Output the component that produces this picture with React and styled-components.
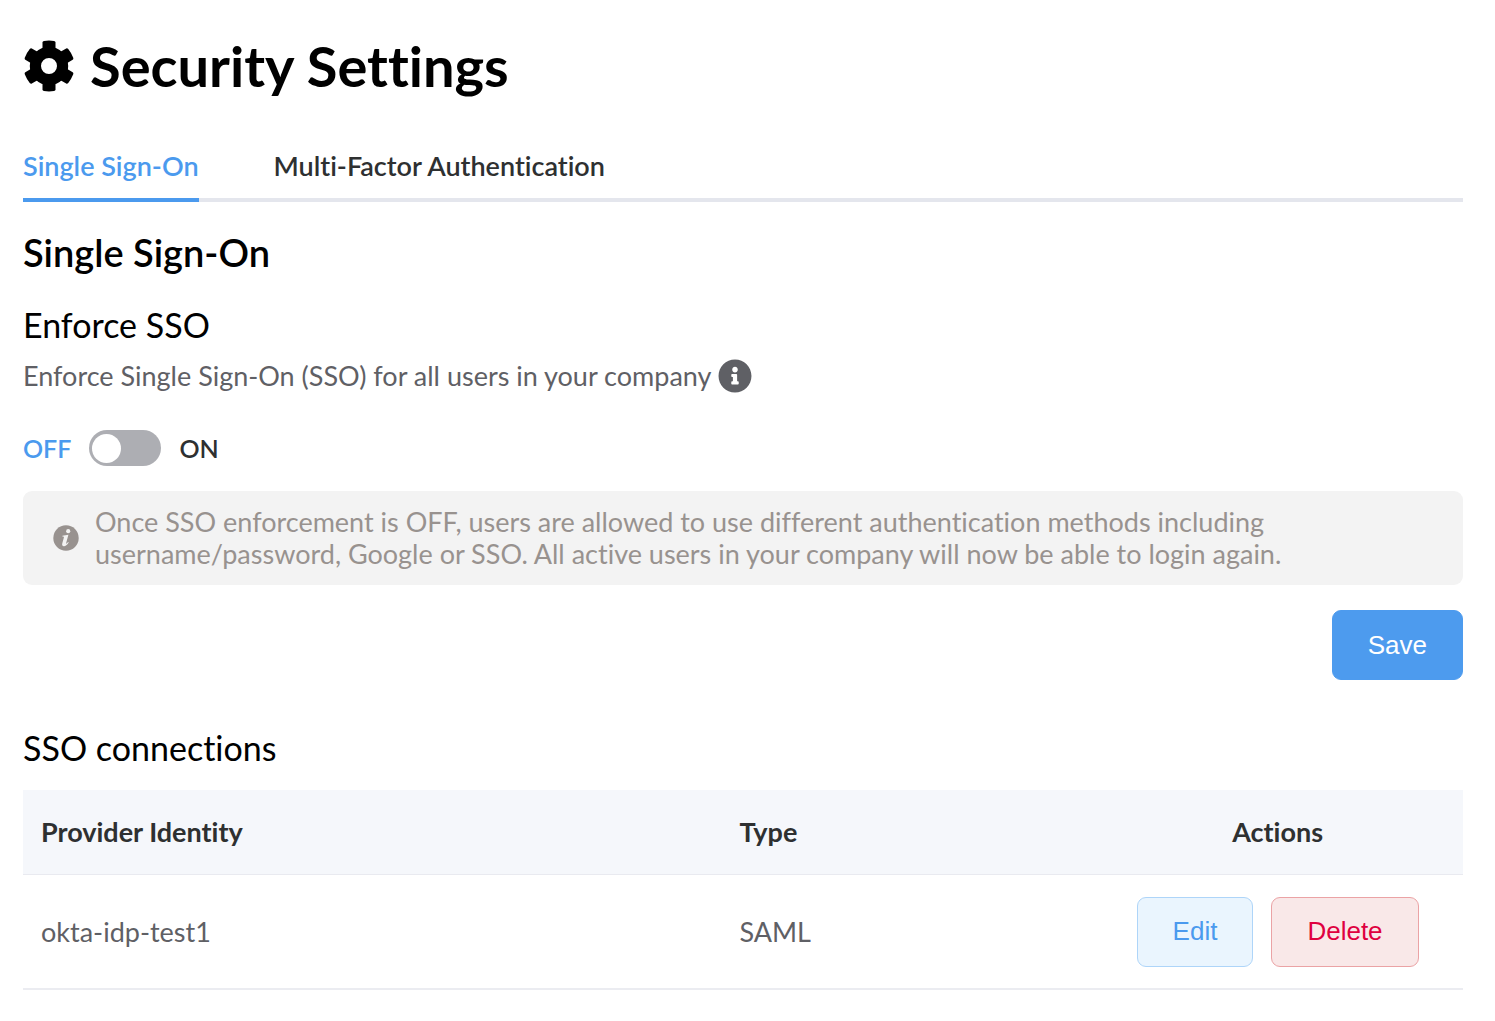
import { useState } from 'react';
import styled, { createGlobalStyle } from 'styled-components';
import { FaInfoCircle } from 'react-icons/fa';

const GlobalStyle = createGlobalStyle`
  * {
    box-sizing: border-box;
  }

  body {
    margin: 0;
    background: #fff;
    color: #000;
    font-family: Lato, 'Open Sans', sans-serif;
    font-size: 27px;
    font-variant-ligatures: none;
    line-height: 32px;
  }
`;

const Page = styled.main`
  padding: 32px 32px 31px 23px;
`;

const PageTitle = styled.h1`
  display: flex;
  align-items: center;
  gap: 15px;
  margin: 0;
  font-size: 56px;
  font-weight: 700;
  line-height: 68px;
`;

const Tabs = styled.nav`
  display: flex;
  gap: 75px;
  margin-top: 42px;
  border-bottom: 4px solid #e4e6ed;
`;

const Tab = styled.button`
  margin: 0 0 -4px;
  padding: 8px 0 16px;
  border: 0;
  border-bottom: 4px solid ${({ $active }) => ($active ? '#4b9aee' : 'transparent')};
  background: none;
  color: ${({ $active }) => ($active ? '#4b9aee' : '#2e3031')};
  font: inherit;
  font-variant-ligatures: none;
  font-weight: 600;
  cursor: pointer;
`;

const SectionTitle = styled.h2`
  margin: 26px 0 0;
  font-size: 38px;
  font-weight: 600;
  line-height: 48px;
`;

const SubTitle = styled.h3`
  margin: 0;
  font-size: 34px;
  font-weight: 400;
  line-height: 48px;
`;

const EnforceBlock = styled.section`
  margin-top: 25px;
`;

const Description = styled.p`
  display: flex;
  align-items: center;
  gap: 7px;
  margin: 9px 0 0;
  color: #5f6065;
  line-height: 36px;
`;

const ToggleRow = styled.label`
  display: flex;
  align-items: center;
  gap: 18px;
  width: fit-content;
  margin-top: 36px;
  font-size: 25px;
  font-weight: 600;
  line-height: 36px;
  cursor: pointer;
`;

const ToggleText = styled.span`
  color: ${({ $active }) => ($active ? '#4b9aee' : '#2e3031')};
`;

const Toggle = styled.input`
  appearance: none;
  display: flex;
  align-items: center;
  width: 72px;
  height: 36px;
  margin: 0;
  padding: 0 3px;
  border-radius: 18px;
  background: ${({ checked }) => (checked ? '#4b9aee' : '#adaeb3')};
  cursor: pointer;

  &::before {
    content: '';
    width: 29px;
    height: 29px;
    margin-left: ${({ checked }) => (checked ? 'auto' : '0')};
    border-radius: 50%;
    background: #fff;
  }
`;

const Notice = styled.div`
  display: flex;
  align-items: center;
  gap: 16px;
  margin-top: 25px;
  padding: 15px 30px;
  border-radius: 9px;
  background: #f3f3f3;
  color: #98928f;

  svg {
    flex-shrink: 0;
  }

  p {
    max-width: 1200px;
    margin: 0;
  }
`;

const FormFooter = styled.div`
  display: flex;
  justify-content: flex-end;
  margin-top: 25px;
`;

const variants = {
  primary: { color: '#fff', background: '#4d9bee', border: '#4d9bee' },
  edit: { color: '#4b9aee', background: '#eaf5fe', border: '#aed5f9' },
  danger: { color: '#df003f', background: '#f9e8e8', border: '#eba3a5' },
};

const Button = styled.button`
  height: 70px;
  padding: 0 35px;
  border: 1px solid ${({ $variant }) => variants[$variant].border};
  border-radius: 9px;
  background: ${({ $variant }) => variants[$variant].background};
  color: ${({ $variant }) => variants[$variant].color};
  font-family: 'Liberation Sans', Arial, sans-serif;
  font-size: 26px;
  cursor: pointer;
`;

const Connections = styled.section`
  margin-top: 44px;
`;

const Table = styled.table`
  width: 100%;
  margin-top: 18px;
  border-spacing: 0;
  table-layout: fixed;
`;

const HeadCell = styled.th`
  width: ${({ $width }) => $width};
  height: 85px;
  padding: 0 18px;
  border-bottom: 1px solid #e9eaf0;
  background: #f5f7fb;
  color: #2e3031;
  font-weight: 700;
  text-align: ${({ $align }) => $align || 'left'};
`;

const Cell = styled.td`
  height: 115px;
  padding: 0 18px;
  border-bottom: 2px solid #ebecf1;
  color: #5f6065;
`;

const Actions = styled.div`
  display: flex;
  justify-content: center;
  gap: 18px;
`;

const teeth = [0, 60, 120, 180, 240, 300];

const GearIcon = () => (
  <svg width="52" height="52" viewBox="0 0 52 52" aria-hidden="true">
    <circle cx="26" cy="26" r="13.6" fill="none" stroke="currentColor" strokeWidth="11.2" />
    {teeth.map((angle) => (
      <path
        key={angle}
        d="M19.5 14 V2.4 Q19.5 1.2 21 0.9 Q26 0.1 31 0.9 Q32.5 1.2 32.5 2.4 V14 Z"
        fill="currentColor"
        transform={`rotate(${angle} 26 26)`}
      />
    ))}
  </svg>
);

const NoticeIcon = () => (
  <svg width="26" height="26" viewBox="0 0 26 26" aria-hidden="true">
    <circle cx="13" cy="13" r="12.7" fill="currentColor" />
    <circle cx="15.2" cy="6.2" r="2.1" fill="#f3f3f3" />
    <path
      d="M9.4 10.8 L15.4 9.8 L13.1 18.2 C12.9 19.1 13.5 18.9 15.1 17 L15.7 17.5 C13.9 20.3 12.4 21.3 10.8 21.2 C9.3 21.1 8.8 20 9.3 18.3 L10.9 12.5 C11.1 11.8 10.7 11.6 9.3 11.5 Z"
      fill="#f3f3f3"
    />
  </svg>
);

const connections = [{ provider: 'okta-idp-test1', type: 'SAML' }];

const tabs = ['Single Sign-On', 'Multi-Factor Authentication'];

const App = () => {
  const [activeTab, setActiveTab] = useState(tabs[0]);
  const [enforced, setEnforced] = useState(false);

  return (
    <>
      <GlobalStyle />
      <Page>
        <PageTitle>
          <GearIcon />
          Security Settings
        </PageTitle>

        <Tabs>
          {tabs.map((tab) => (
            <Tab key={tab} type="button" $active={tab === activeTab} onClick={() => setActiveTab(tab)}>
              {tab}
            </Tab>
          ))}
        </Tabs>

        <SectionTitle>Single Sign-On</SectionTitle>

        <EnforceBlock>
          <SubTitle>Enforce SSO</SubTitle>
          <Description>
            Enforce Single Sign-On (SSO) for all users in your company
            <FaInfoCircle size={34} />
          </Description>

          <ToggleRow>
            <ToggleText $active={!enforced}>OFF</ToggleText>
            <Toggle
              type="checkbox"
              role="switch"
              checked={enforced}
              onChange={(e) => setEnforced(e.target.checked)}
            />
            <ToggleText $active={enforced}>ON</ToggleText>
          </ToggleRow>

          <Notice>
            <NoticeIcon />
            <p>
              Once SSO enforcement is OFF, users are allowed to use different authentication methods including
              username/password, Google or SSO. All active users in your company will now be able to login again.
            </p>
          </Notice>

          <FormFooter>
            <Button type="button" $variant="primary">Save</Button>
          </FormFooter>
        </EnforceBlock>

        <Connections>
          <SubTitle>SSO connections</SubTitle>
          <Table>
            <thead>
              <tr>
                <HeadCell $width="48.5%">Provider Identity</HeadCell>
                <HeadCell>Type</HeadCell>
                <HeadCell $align="center">Actions</HeadCell>
              </tr>
            </thead>
            <tbody>
              {connections.map(({ provider, type }) => (
                <tr key={provider}>
                  <Cell>{provider}</Cell>
                  <Cell>{type}</Cell>
                  <Cell>
                    <Actions>
                      <Button type="button" $variant="edit">Edit</Button>
                      <Button type="button" $variant="danger">Delete</Button>
                    </Actions>
                  </Cell>
                </tr>
              ))}
            </tbody>
          </Table>
        </Connections>
      </Page>
    </>
  );
};

export default App;
